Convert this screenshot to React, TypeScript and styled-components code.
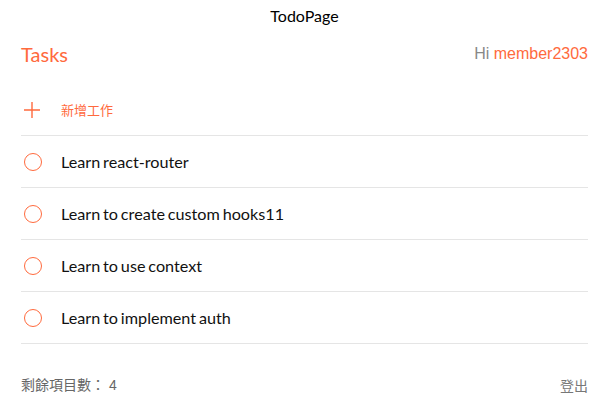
import React from "react";
import styled, { createGlobalStyle } from "styled-components";

const GlobalStyle = createGlobalStyle`
  body {
    margin: 0;
    background: #ffffff;
    font-family: Lato, "Noto Sans CJK TC", sans-serif;
  }
`;

const ORANGE = "#ff6a3d";

const Page = styled.div`
  width: 607px;
  box-sizing: border-box;
  padding: 0 19px 0 21px;
  display: flex;
  flex-direction: column;
`;

const Title = styled.h1`
  margin: 0;
  height: 32px;
  line-height: 32px;
  text-align: center;
  font-size: 16px;
  font-weight: 400;
  color: #000;
`;

const Header = styled.div`
  height: 44px;
  display: flex;
  align-items: center;
  justify-content: space-between;
`;

const Heading = styled.h2`
  margin: 0;
  font-size: 20px;
  font-weight: 400;
  color: ${ORANGE};
`;

const Greeting = styled.div`
  font-family: "Liberation Sans", Arial, sans-serif;
  font-size: 16px;
  color: #888;
`;

const UserName = styled.span`
  color: ${ORANGE};
`;

const Row = styled.div`
  height: 51px;
  flex-shrink: 0;
  display: flex;
  align-items: center;
  border-bottom: 1px solid #e5e5e5;
`;

const AddRow = styled(Row)`
  margin-top: 8px;
`;

const IconCell = styled.div`
  width: 40px;
  box-sizing: border-box;
  display: flex;
  align-items: center;
  padding-left: 2px;
`;

const AddLabel = styled.span`
  font-family: "Noto Sans CJK TC", sans-serif;
  font-size: 13px;
  color: ${ORANGE};
`;

const Circle = styled.span`
  width: 18px;
  height: 18px;
  box-sizing: border-box;
  border: 1.3px solid ${ORANGE};
  border-radius: 50%;
  margin-left: 1px;
`;

const TaskText = styled.span`
  font-size: 16.2px;
  word-spacing: -1.3px;
  color: #111;
`;

const Footer = styled.div`
  padding-top: 31px;
  line-height: 20px;
  display: flex;
  align-items: center;
  justify-content: space-between;
  font-family: "Liberation Sans", "Noto Sans CJK TC", sans-serif;
  font-size: 14px;
  color: #666;
`;

const Count = styled.span``;

const Logout = styled.span`
  font-family: "Noto Sans CJK TC", sans-serif;
  color: #777;
`;

const tasks = [
  "Learn react-router",
  "Learn to create custom hooks11",
  "Learn to use context",
  "Learn to implement auth",
];

export default function App() {
  return (
    <>
      <GlobalStyle />
      <Page>
        <Title>TodoPage</Title>
        <Header>
          <Heading>Tasks</Heading>
          <Greeting>
            Hi <UserName>member2303</UserName>
          </Greeting>
        </Header>
        <AddRow>
          <IconCell>
            <svg width="18" height="18" viewBox="0 0 18 18">
              <path d="M9 1v16M1 9h16" stroke={ORANGE} strokeWidth="1.4" fill="none" />
            </svg>
          </IconCell>
          <AddLabel>新增工作</AddLabel>
        </AddRow>
        {tasks.map((t) => (
          <Row key={t}>
            <IconCell>
              <Circle />
            </IconCell>
            <TaskText>{t}</TaskText>
          </Row>
        ))}
        <Footer>
          <Count>剩餘項目數： 4</Count>
          <Logout>登出</Logout>
        </Footer>
      </Page>
    </>
  );
}
